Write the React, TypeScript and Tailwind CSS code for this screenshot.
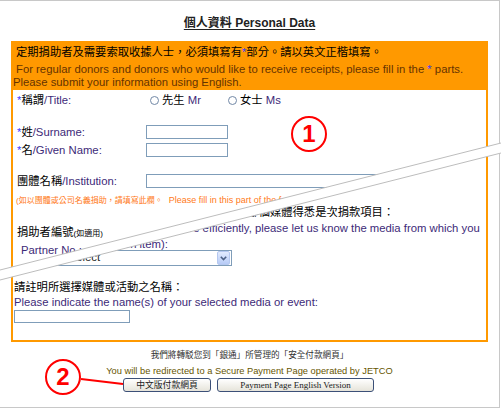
import React from 'react';

const purple = 'text-[#3d2a78]';

const Star = () => <span className="text-[#3c3cff]">*</span>;

const Radio = () => (
  <span className="inline-block w-[9px] h-[9px] rounded-full border border-[#7188a6] bg-white" />
);

const TextBox = ({ className }: { className: string }) => (
  <div className={`border border-[#7f9db9] bg-white ${className}`} />
);

const UpperPart = () => (
  <div className="col-start-1 row-start-1 pt-[3px] text-[11.3px] leading-[14px] [clip-path:polygon(0_0,100%_0,100%_62px,0_182px)]">
    <div className="flex h-[14px] items-center pl-[4px]">
      <div className="w-[133px]">
        <Star />
        稱謂<span className={purple}>/Title:</span>
      </div>
      <div className="flex w-[78px] items-center">
        <Radio />
        <span className="ml-[3px]">
          先生 <span className={purple}>Mr</span>
        </span>
      </div>
      <div className="flex items-center">
        <Radio />
        <span className="ml-[3px]">
          女士 <span className={purple}>Ms</span>
        </span>
      </div>
    </div>

    <div className="mt-[18px] flex h-[14px] items-center pl-[4px]">
      <div className="w-[129px]">
        <Star />
        姓<span className={purple}>/Surname:</span>
      </div>
      <TextBox className="h-[14px] w-[82px]" />
    </div>
    <div className="mt-[4px] flex h-[14px] items-center pl-[4px]">
      <div className="w-[129px]">
        <Star />
        名<span className={purple}>/Given Name:</span>
      </div>
      <TextBox className="h-[14px] w-[82px]" />
    </div>

    <div className="mt-[17px] flex h-[14px] items-center pl-[4px]">
      <div className="w-[129px]">
        團體名稱<span className={purple}>/Institution:</span>
      </div>
      <TextBox className="h-[14px] w-[300px]" />
    </div>

    <div className="mt-[6px] whitespace-nowrap pl-[3px] leading-[11px] text-[#ff7a1a]">
      <span className="text-[8px]">(如以團體或公司名義捐助，請填寫此欄。</span>
      <span className="ml-[6px] text-[9px]">
        Please fill in this part of the form if you are donating in the name of an organization.)
      </span>
    </div>

    <div className="mt-[19px] whitespace-nowrap pl-[4px]">
      捐助者編號<span className="text-[8px]">(如適用)</span>
    </div>
    <div className={`mt-[2px] whitespace-nowrap pl-[8px] ${purple}`}>Partner No.:</div>
  </div>
);

const LowerPart = () => (
  <div className="col-start-1 row-start-1 pt-[115px] text-[11.3px] [clip-path:polygon(0_182px,100%_62px,100%_100%,0_100%)]">
    <div className="whitespace-nowrap pl-[31px] leading-[14px]">
      為了更有效地為您服務，請告訴我們您從哪個媒體得悉是次捐款項目：
    </div>
    <div className={`mt-[1px] whitespace-nowrap leading-[16px] ${purple}`}>
      <div className="pl-[54px]">
        In order to serve you more efficiently, please let us know the media from which you
      </div>
      <div className="pl-[6px]">learned of this donation item):</div>
    </div>

    <div className="ml-[13px] mt-[-2px] flex h-[16px] w-[206px] items-center border border-[#7f9db9] bg-white">
      <span className="flex-1 pl-[4px] leading-none text-[#222]">Please Select</span>
      <span className="mr-px flex h-[14px] w-[13px] items-center justify-center rounded-[2px] border border-[#b5c8f0] bg-linear-to-b from-[#e2ebfe] to-[#b7cbf6]">
        <svg width="7" height="5" viewBox="0 0 7 5">
          <path d="M0.8 0.8 L3.5 3.6 L6.2 0.8" fill="none" stroke="#4d6185" strokeWidth="1.6" />
        </svg>
      </span>
    </div>

    <div className="mt-[13px] pl-px leading-[16px]">請註明所選擇媒體或活動之名稱：</div>
    <div className={`pl-px leading-[15px] ${purple}`}>
      Please indicate the name(s) of your selected media or event:
    </div>
    <TextBox className="ml-px h-[13px] w-[116px]" />
  </div>
);

export default function App() {
  return (
    <div className="relative h-[409px] w-[501px] bg-white text-black [font-family:'Liberation_Sans','Noto_Sans_CJK_TC',sans-serif]">
      <div className="h-[408px] w-[500px] border-t border-r border-b border-[#c8c8c8]">
        <div className="h-[40px] pt-[9px] text-center">
          <span className="text-[12px] font-bold leading-[14px] text-[#222] underline underline-offset-2">
            個人資料 Personal Data
          </span>
        </div>

        <div className="ml-[11px] w-[477px] border-2 border-[#ff9900]">
          <div className="h-[47px] bg-[#ff9900] pt-[2px] text-[11.3px]">
            <div className="whitespace-nowrap pl-[3px] leading-[14px]">
              定期捐助者及需要索取收據人士，必須填寫有<Star />部分。請以英文正楷填寫。
            </div>
            <div className="mt-[4px] whitespace-nowrap leading-[13px] text-[#663300]">
              <div className="pl-[3px]">
                For regular donors and donors who would like to receive receipts, please fill in the <Star /> parts.
              </div>
              <div>Please submit your information using English.</div>
            </div>
          </div>

          <div className="grid h-[250px] bg-white">
            <UpperPart />
            <LowerPart />
          </div>
        </div>

        <div className="mt-[7px] text-center text-[8.6px] leading-[12px] text-[#333]">
          我們將轉駁您到「銀通」所管理的「安全付款網頁」
        </div>
        <div className="mt-[4px] text-center text-[9.3px] leading-[12px] text-[#665500]">
          You will be redirected to a Secure Payment Page operated by JETCO
        </div>
        <div className="mt-px flex justify-center gap-[6px] pr-[2px]">
          <button className="flex h-[14px] w-[88px] items-center justify-center rounded-[3px] border border-[#3c5078] bg-linear-to-b from-white to-[#e6e4da] text-[8.8px] leading-none text-[#222]">
            中文版付款網頁
          </button>
          <button className="flex h-[14px] w-[157px] items-center justify-center rounded-[3px] border border-[#3c5078] bg-linear-to-b from-white to-[#e6e4da] text-[9px] leading-none text-[#222] [font-family:'Liberation_Serif',serif]">
            Payment Page English Version
          </button>
        </div>
      </div>

      {/* torn-page band and annotation marks */}
      <svg className="pointer-events-none absolute left-0 top-0" width="501" height="409" viewBox="0 0 501 409">
        <polygon points="0,270 501,143 501,153 0,280" fill="#fff" />
        <line x1="0" y1="270" x2="501" y2="143" stroke="#bdbdbd" strokeWidth="1" />
        <line x1="0" y1="280" x2="501" y2="153" stroke="#bdbdbd" strokeWidth="1" />
        <line x1="81" y1="379" x2="123" y2="384" stroke="#ff0000" strokeWidth="2" />
      </svg>
      <div className="absolute left-[291px] top-[116px] flex h-[36px] w-[36px] items-center justify-center rounded-full border-2 border-[#ff0000] text-[24px] font-bold leading-none text-[#ff0000]">
        1
      </div>
      <div className="absolute left-[45px] top-[359px] flex h-[36px] w-[36px] items-center justify-center rounded-full border-2 border-[#ff0000] text-[24px] font-bold leading-none text-[#ff0000]">
        2
      </div>
    </div>
  );
}
